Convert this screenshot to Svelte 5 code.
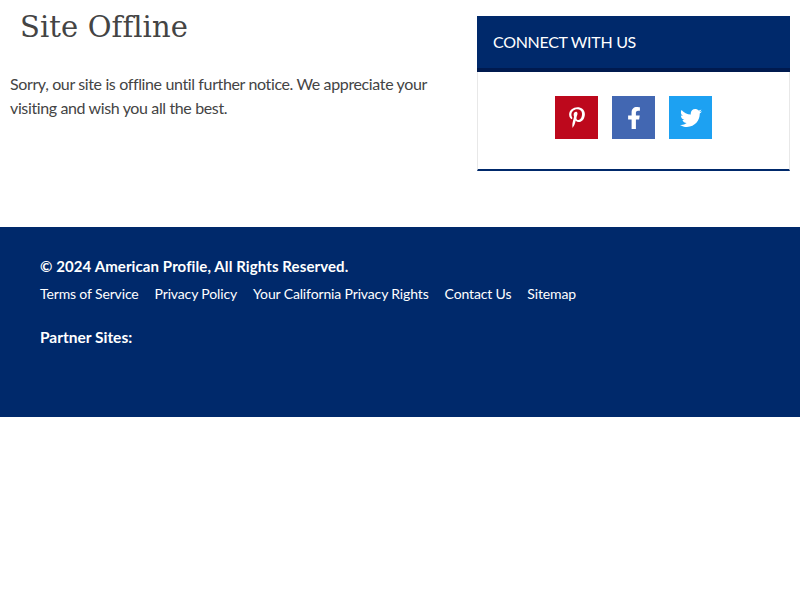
<script>
	const links = ["Terms of Service", "Privacy Policy", "Your California Privacy Rights", "Contact Us", "Sitemap"];
</script>

<div class="page">
	<main class="top">
		<section class="content">
			<h1>Site Offline</h1>
			<p>Sorry, our site is offline until further notice. We appreciate your visiting and wish you all the best.</p>
		</section>
		<aside class="widget">
			<h2>CONNECT WITH US</h2>
			<div class="social">
				<a href="#pinterest" class="icon pinterest" aria-label="Pinterest">
					<svg viewBox="0 0 384 512" width="16" height="21"><path fill="currentColor" d="M204 6.5C101.4 6.5 0 74.9 0 185.6 0 256 39.6 296 63.6 296c9.9 0 15.6-27.6 15.6-35.4 0-9.3-23.7-29.1-23.7-67.8 0-80.4 61.2-137.4 140.4-137.4 68.1 0 118.5 38.7 118.5 109.8 0 53.1-21.3 152.7-90.3 152.7-24.9 0-46.2-18-46.2-43.8 0-37.8 26.4-74.4 26.4-113.4 0-66.2-93.9-54.2-93.9 25.8 0 16.8 2.1 35.4 9.6 50.7-13.8 59.4-42 147.9-42 209.1 0 18.9 2.7 37.5 4.5 56.4 3.4 3.8 1.7 3.4 6.9 1.5 50.4-69 48.6-82.5 71.4-172.8 12.3 23.4 44.1 36 69.3 36 106.2 0 153.9-103.5 153.9-196.8C384 71.3 298.2 6.5 204 6.5z"/></svg>
				</a>
				<a href="#facebook" class="icon facebook" aria-label="Facebook">
					<svg viewBox="0 0 320 512" width="14" height="22"><path fill="currentColor" d="M279.14 288l14.22-92.66h-88.91v-60.13c0-25.35 12.42-50.06 52.24-50.06h40.42V6.26S260.43 0 225.36 0c-73.22 0-121.08 44.38-121.08 124.72v70.62H22.89V288h81.39v224h100.17V288z"/></svg>
				</a>
				<a href="#twitter" class="icon twitter" aria-label="Twitter">
					<svg viewBox="0 0 512 512" width="22" height="22"><path fill="currentColor" d="M459.37 151.716c.325 4.548.325 9.097.325 13.645 0 138.72-105.583 298.558-298.558 298.558-59.452 0-114.68-17.219-161.137-47.106 8.447.974 16.568 1.299 25.34 1.299 49.055 0 94.213-16.568 130.274-44.832-46.132-.975-84.792-31.188-98.112-72.772 6.498.974 12.995 1.624 19.818 1.624 9.421 0 18.843-1.3 27.614-3.573-48.081-9.747-84.143-51.98-84.143-102.985v-1.299c13.969 7.797 30.214 12.67 47.431 13.319-28.264-18.843-46.781-51.005-46.781-87.391 0-19.492 5.197-37.36 14.294-52.954 51.655 63.675 129.3 105.258 216.365 109.807-1.624-7.797-2.599-15.918-2.599-24.04 0-57.828 46.782-104.934 104.934-104.934 30.213 0 57.502 12.67 76.67 33.137 23.715-4.548 46.456-13.32 66.599-25.34-7.798 24.366-24.366 44.833-46.132 57.827 21.117-2.273 41.584-8.122 60.426-16.243-14.292 20.791-32.161 39.308-52.628 54.253z"/></svg>
				</a>
			</div>
		</aside>
	</main>

	<footer>
		<div class="copy">© 2024 American Profile, All Rights Reserved.</div>
		<nav>
			{#each links as link}
				<a href="#{link}">{link}</a>
			{/each}
		</nav>
		<div class="partners">Partner Sites:</div>
	</footer>
</div>

<style>
	:global(body) {
		background: #fff;
		font-family: "Lato", "Noto Sans", sans-serif;
		color: #444;
	}
	.top {
		display: flex;
		justify-content: space-between;
		height: 227px;
		padding-right: 10px;
		box-sizing: border-box;
	}
	.content {
		width: 440px;
		padding-left: 10px;
	}
	h1 {
		margin: 8px 0 0 10px;
		font: 400 29px/38px "DejaVu Serif", serif;
		letter-spacing: 0.1px;
		color: #444;
	}
	p {
		margin: 26px 0 0;
		font-size: 16px;
		letter-spacing: -0.37px;
		line-height: 24px;
	}
	.widget {
		width: 313px;
		height: 155px;
		margin-top: 16px;
		box-sizing: border-box;
		border: 1px solid #e8e8e8;
		border-top: 0;
		border-bottom: 2px solid #00296b;
	}
	h2 {
		margin: 0 -1px;
		height: 56px;
		box-sizing: border-box;
		padding: 0 16px;
		background: #00296b;
		border-bottom: 4px solid #001a4f;
		color: #fff;
		font-size: 16px;
		font-weight: 400;
		letter-spacing: -0.3px;
		line-height: 52px;
	}
	.social {
		display: flex;
		justify-content: center;
		gap: 14px;
		padding-top: 24px;
	}
	.icon {
		width: 43px;
		height: 43px;
		display: flex;
		align-items: center;
		justify-content: center;
		color: #fff;
	}
	.pinterest { background: #bd081c; }
	.facebook { background: #4267b2; }
	.twitter { background: #1da1f2; }
	footer {
		height: 190px;
		box-sizing: border-box;
		padding: 29px 40px 0;
		background: #00296b;
		color: #fff;
	}
	.copy, .partners {
		font-size: 15px;
		font-weight: 700;
		line-height: 20px;
	}
	.copy {
		letter-spacing: 0.1px;
	}
	nav {
		display: flex;
		gap: 16px;
		margin-top: 8px;
		line-height: 20px;
	}
	nav a {
		color: #fff;
		font-size: 14px;
		letter-spacing: -0.14px;
		text-decoration: none;
	}
	.partners {
		margin-top: 23px;
		font-size: 15.5px;
	}
</style>
